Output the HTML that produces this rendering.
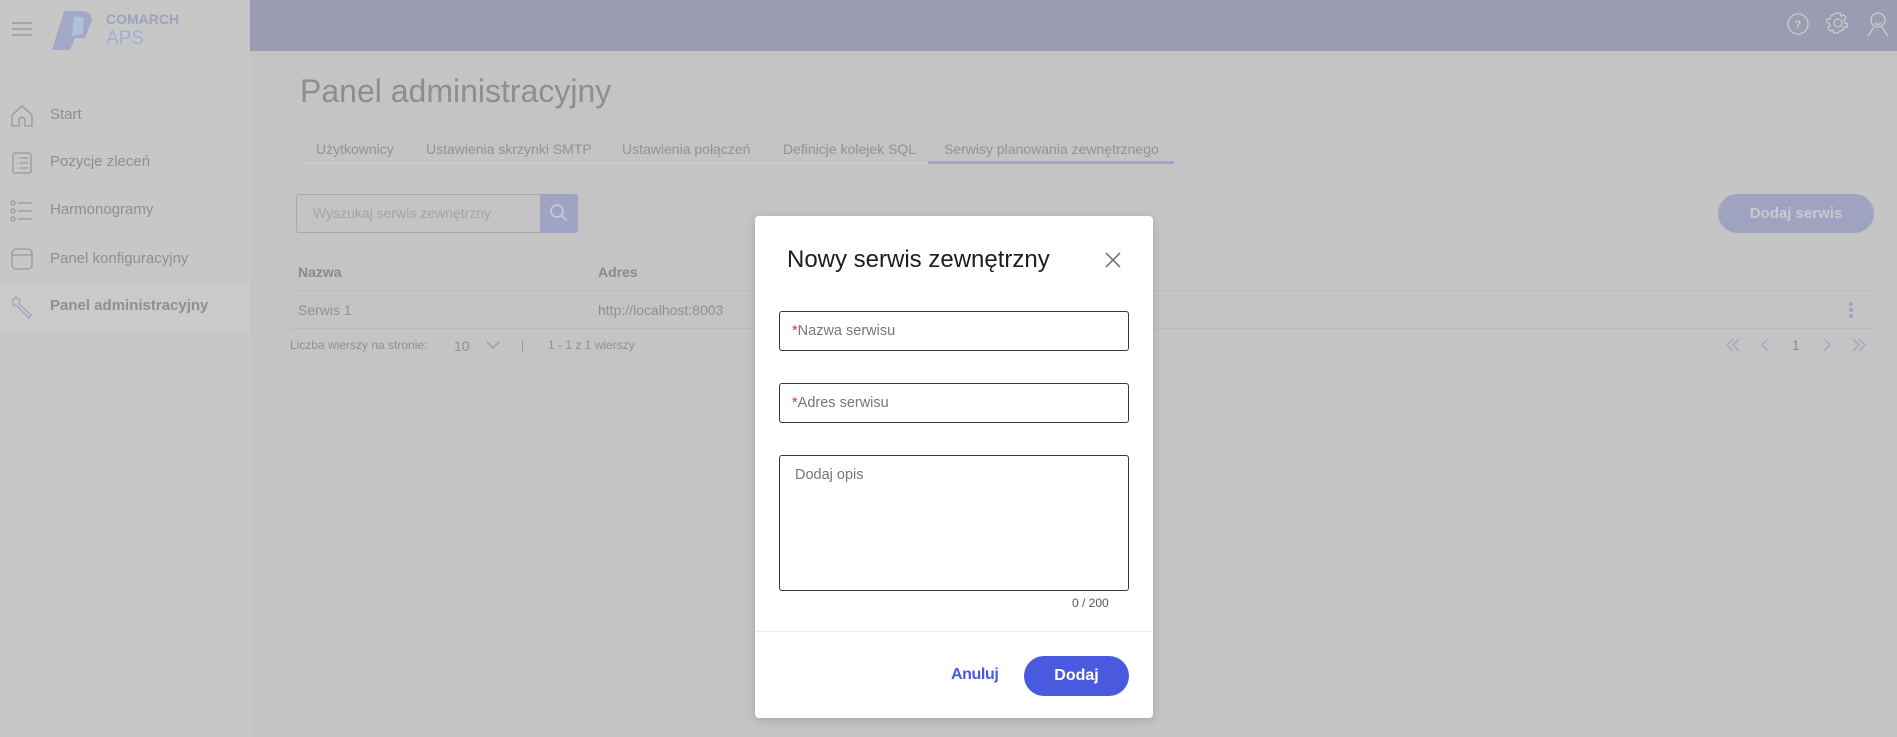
<!DOCTYPE html>
<html><head><meta charset="utf-8"><style>
*{box-sizing:border-box;margin:0;padding:0}
body{width:1897px;height:737px;overflow:hidden;background:#c4c4c4;font-family:"Liberation Sans",sans-serif;position:relative;color:#909090}
.a{position:absolute;white-space:nowrap}
.side{left:0;top:0;width:250px;height:737px;background:#c7c7c7}
.hdr{left:250px;top:0;width:1647px;height:51px;background:#9a9db2}
.nav{left:50px;font-size:15px;color:#8f8f8f}
.tab{top:141px;font-size:14px;color:#929292}
.inp{position:absolute;left:779px;width:350px;border:1px solid #3a3a3a;border-radius:3px;background:#fff}
.ph{position:absolute;left:13px;font-size:14.5px;color:#777}
.ph b{color:#d6324e;font-weight:normal}
</style></head><body>
<div class="a side"></div>
<div class="a" style="left:0;top:284px;width:250px;height:46px;background:#cacaca"></div>
<div class="a hdr"></div>
<svg class="a" style="left:11px;top:21px" width="22" height="16"><g stroke="#9a9a9a" stroke-width="1.5"><line x1="1" y1="2" x2="21" y2="2"/><line x1="1" y1="8" x2="21" y2="8"/><line x1="1" y1="14" x2="21" y2="14"/></g></svg>
<svg class="a" style="left:50px;top:10px" width="44" height="41"><path d="M14 1 H32 Q41 1 42 10 L35 28 H25 L20 40 H2 Z" fill="#a4a8c8"/><path d="M24 6 L34 8 L33 24 L22 26 Z" fill="#b0c0d8"/></svg>
<div class="a" style="left:106px;top:11px;font-size:14px;font-weight:bold;color:#9ea2c0">COMARCH</div>
<div class="a" style="left:106px;top:28px;font-size:19px;color:#9cb0d4">APS</div>
<svg class="a" style="left:10px;top:104px" width="24" height="24" fill="none" stroke="#999" stroke-width="1.3"><path d="M2 11 L12 2 L22 11 V22 H15 V15 Q12 12 9 15 V22 H2 Z"/></svg>
<svg class="a" style="left:11px;top:151px" width="22" height="24" fill="none" stroke="#999" stroke-width="1.3"><rect x="2" y="2" width="18" height="20" rx="2"/><path d="M6 7h1M9 7h8M6 12h1M9 12h8M6 17h1M9 17h8"/></svg>
<svg class="a" style="left:10px;top:200px" width="24" height="22" fill="none" stroke="#999" stroke-width="1.3"><circle cx="3" cy="3" r="2"/><circle cx="3" cy="11" r="2"/><circle cx="3" cy="19" r="2"/><path d="M8 3h14M8 11h14M8 19h14"/></svg>
<svg class="a" style="left:10px;top:247px" width="24" height="24" fill="none" stroke="#999" stroke-width="1.3"><rect x="2" y="2" width="20" height="20" rx="4"/><path d="M2 8h20"/></svg>
<svg class="a" style="left:10px;top:294px" width="24" height="26" fill="none" stroke="#9ea2c4" stroke-width="1.3"><path d="M3 6 L6 3 L10 6 L9 10 L21 21 L19 24 L7 12 L3 11 Z"/></svg>
<div class="a nav" style="top:106px">Start</div>
<div class="a nav" style="top:153px">Pozycje zleceń</div>
<div class="a nav" style="top:201px">Harmonogramy</div>
<div class="a nav" style="top:250px">Panel konfiguracyjny</div>
<div class="a nav" style="top:297px;font-weight:bold">Panel administracyjny</div>
<svg class="a" style="left:1786px;top:12px" width="24" height="24" fill="none" stroke="#ccc" stroke-width="1.3"><circle cx="12" cy="12" r="10"/><text x="12" y="16" font-size="11" font-weight="bold" fill="#ccc" stroke="none" text-anchor="middle" font-family="Liberation Sans">?</text></svg>
<svg class="a" style="left:1826px;top:11px" width="24" height="24" fill="none" stroke="#ccc" stroke-width="1.3"><circle cx="12" cy="12" r="4"/><path d="M10 2h4l1 3 3-1 2 3-2 2 1 3 3 1v0l-1 3-3 0-1 3-3 1-2 2h-4l-1-3-3 1-2-3 2-2-1-3-3-1 1-3 3 0 1-3z"/></svg>
<svg class="a" style="left:1866px;top:11px" width="24" height="26" fill="none" stroke="#ccc" stroke-width="1.3"><circle cx="12" cy="9" r="7"/><path d="M2 25 L8 16 M22 25 L16 16 M9 12 Q12 15 15 12"/></svg>
<div class="a" style="left:300px;top:73px;font-size:32px;color:#8e8e8e">Panel administracyjny</div>
<div class="a" style="left:300px;top:162px;width:874px;height:2px;background:#c9c9c9"></div>
<div class="a tab" style="left:316px">Użytkownicy</div>
<div class="a tab" style="left:426px">Ustawienia skrzynki SMTP</div>
<div class="a tab" style="left:622px">Ustawienia połączeń</div>
<div class="a tab" style="left:783px">Definicje kolejek SQL</div>
<div class="a tab" style="left:944px">Serwisy planowania zewnętrznego</div>
<div class="a" style="left:928px;top:161px;width:246px;height:3px;background:#9fa3c4"></div>
<div class="a" style="left:296px;top:194px;width:246px;height:39px;border:1px solid #a9a9a9;border-radius:3px"></div>
<div class="a" style="left:313px;top:205px;font-size:14px;color:#a3a3a3">Wyszukaj serwis zewnętrzny</div>
<div class="a" style="left:540px;top:194px;width:38px;height:39px;background:#9fa3c4;border-radius:0 3px 3px 0"></div>
<svg class="a" style="left:549px;top:203px" width="20" height="20" fill="none" stroke="#c8cad8" stroke-width="1.6"><circle cx="8" cy="8" r="6"/><path d="M12.5 12.5 L18 18"/></svg>
<div class="a" style="left:1718px;top:194px;width:156px;height:39px;background:#a0a3c0;border-radius:20px;color:#c8c9d2;font-weight:bold;font-size:15px;text-align:center;line-height:39px">Dodaj serwis</div>
<div class="a" style="left:298px;top:264px;font-size:14px;font-weight:bold;color:#8a8a8a">Nazwa</div>
<div class="a" style="left:598px;top:264px;font-size:14px;font-weight:bold;color:#8a8a8a">Adres</div>
<div class="a" style="left:290px;top:290px;width:1584px;height:1px;background:#bcbcbc"></div>
<div class="a" style="left:298px;top:302px;font-size:14px">Serwis 1</div>
<div class="a" style="left:598px;top:302px;font-size:14px">http://localhost:8003</div>
<svg class="a" style="left:1848px;top:301px" width="6" height="18" fill="#9fa3c4"><circle cx="3" cy="3" r="2"/><circle cx="3" cy="9" r="2"/><circle cx="3" cy="15" r="2"/></svg>
<div class="a" style="left:290px;top:328px;width:1584px;height:1px;background:#bcbcbc"></div>
<div class="a" style="left:290px;top:338px;font-size:12px">Liczba wierszy na stronie:</div>
<div class="a" style="left:454px;top:338px;font-size:14px">10</div>
<svg class="a" style="left:486px;top:340px" width="14" height="10" fill="none" stroke="#999" stroke-width="1.3"><path d="M1 2 L7 8 L13 2"/></svg>
<div class="a" style="left:521px;top:338px;font-size:12px">|</div>
<div class="a" style="left:548px;top:338px;font-size:12px">1 - 1 z 1 wierszy</div>
<svg class="a" style="left:1726px;top:337px" width="150" height="16" fill="none" stroke="#9fa3c4" stroke-width="1.3"><path d="M7 2 L1 8 L7 14 M13 2 L7 8 L13 14 M42 2 L36 8 L42 14 M98 2 L104 8 L98 14 M127 2 L133 8 L127 14 M133 2 L139 8 L133 14"/></svg>
<div class="a" style="left:1792px;top:337px;font-size:14px;color:#888">1</div>
<div class="a" style="left:755px;top:216px;width:398px;height:502px;background:#fff;border-radius:4px;box-shadow:0 2px 10px rgba(0,0,0,.15)"></div>
<div class="a" style="left:787px;top:246px;font-size:24px;color:#1e1e1e">Nowy serwis zewnętrzny</div>
<svg class="a" style="left:1105px;top:252px" width="16" height="16" stroke="#777" stroke-width="1.6"><path d="M1 1 L15 15 M15 1 L1 15"/></svg>
<div class="inp" style="top:311px;height:40px"><div class="ph" style="top:11px;left:12px"><b>*</b>Nazwa serwisu</div></div>
<div class="inp" style="top:383px;height:40px"><div class="ph" style="top:11px;left:12px"><b>*</b>Adres serwisu</div></div>
<div class="inp" style="top:455px;height:136px"><div class="ph" style="top:11px;left:15px">Dodaj opis</div></div>
<div class="a" style="left:1072px;top:596px;font-size:12px;color:#555">0 / 200</div>
<div class="a" style="left:755px;top:631px;width:398px;height:1px;background:#eee"></div>
<div class="a" style="left:951px;top:666px;font-size:16px;font-weight:bold;color:#4a5ae0;letter-spacing:-0.4px">Anuluj</div>
<div class="a" style="left:1024px;top:656px;width:105px;height:40px;background:#4a5adf;border-radius:20px;color:#fff;font-weight:bold;font-size:16px;text-align:center;line-height:40px">Dodaj</div>
</body></html>
